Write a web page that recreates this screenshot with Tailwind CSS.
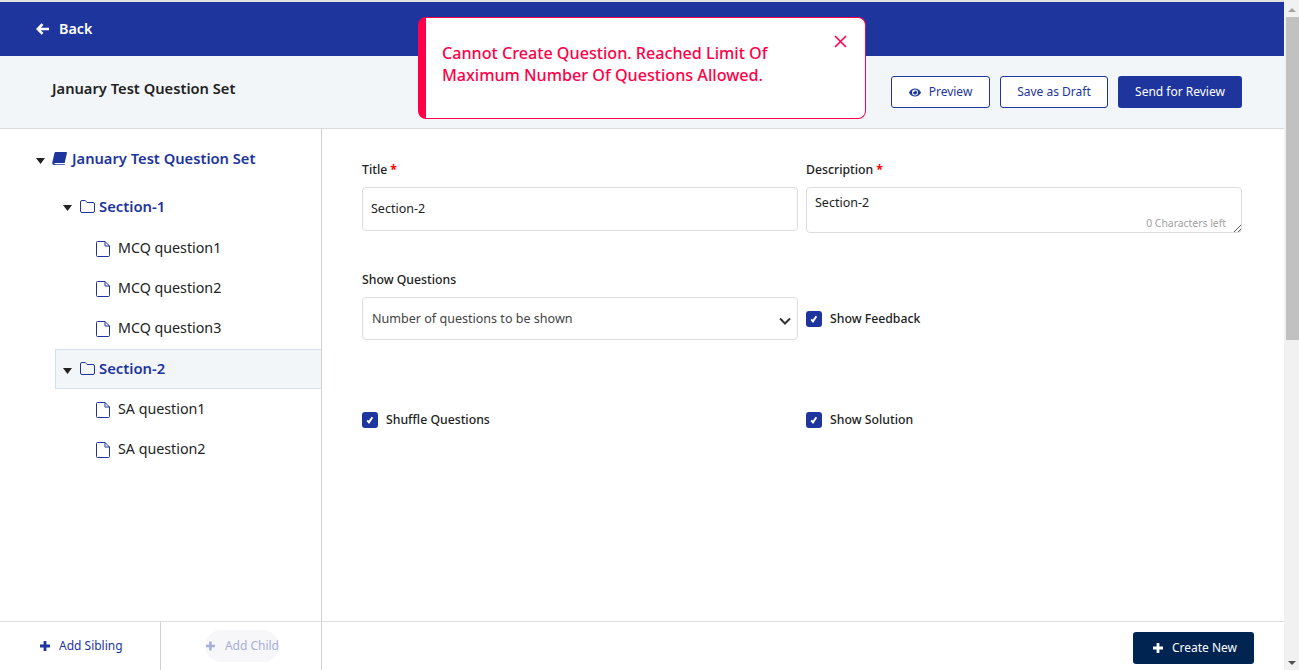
<!DOCTYPE html>
<html>
<head>
<meta charset="utf-8">
<script src="https://cdn.jsdelivr.net/npm/@tailwindcss/browser@4"></script>
</head>
<body class="overflow-hidden bg-white">
<div class="relative flex h-[670px] w-[1299px] font-['Noto_Sans',sans-serif] text-[#222222]">
  <div class="flex h-full w-[1284px] flex-col">
    <div class="h-[2px] bg-[#e3e3e3]"></div>
    <header class="flex h-[54px] items-center bg-[#1d359d] pl-[36px] text-white">
      <svg class="mr-[10px] h-[12px] w-[13px]" viewBox="0 0 13 12" fill="none" stroke="currentColor" stroke-width="2.600"><path d="M6.500 1.200L1.800 6l4.700 4.800M2 6h11"/></svg>
      <span class="pt-[1px] text-[14.300px] font-semibold leading-none">Back</span>
    </header>
    <div class="flex h-[73px] items-center justify-between border-b border-[#d9dbdd] bg-[#f3f6f9] pr-[42px] pl-[52px]">
      <span class="mb-[8px] text-[14.700px] font-semibold text-[#222222]">January Test Question Set</span>
      <div class="flex gap-[10px] text-[12px] text-[#1d359d]">
        <button class="flex h-[32px] w-[99px] items-center justify-center gap-[8px] rounded-[3px] border border-[#1d359d] bg-white">
          <svg class="h-[11px] w-[12px]" viewBox="0 0 576 512" fill="currentColor"><path d="M572.500 241.400C518.300 135.600 410.900 64 288 64S57.700 135.600 3.500 241.400a32.400 32.400 0 0 0 0 29.200C57.700 376.400 165.100 448 288 448s230.300-71.600 284.500-177.400a32.400 32.400 0 0 0 0-29.200zM288 400a144 144 0 1 1 144-144 143.900 143.900 0 0 1-144 144zm0-240a95.300 95.300 0 0 0-25.300 3.800 47.900 47.900 0 0 1-66.900 66.900A95.800 95.800 0 1 0 288 160z"/></svg>
          Preview
        </button>
        <button class="h-[32px] w-[108px] rounded-[3px] border border-[#1d359d] bg-white">Save as Draft</button>
        <button class="h-[32px] w-[124px] rounded-[3px] bg-[#1d359d] text-white">Send for Review</button>
      </div>
    </div>
    <div class="flex min-h-0 flex-1">
      <aside class="w-[322px] shrink-0 border-r border-[#cfd1d3]">
        <div class="flex h-[60px] items-center pl-[36px] pb-[1px]">
          <svg class="mr-[7px] mt-[4px] h-[6px] w-[9px]" viewBox="0 0 9 6" fill="#222222"><path d="M0 0h9L4.500 6z"/></svg>
          <svg class="mr-[5px] h-[13px] w-[15px]" viewBox="0 0 15 13" fill="#1d359d"><path d="M4 0h10.200c.5 0 .8.400.7.900L12.800 10.500c-.1.400-.4.500-.8.500H3c-.8 0-.9 1.200 0 1.200h9.600c.2 0 .3 0 .3.200 0 .4-.2.600-.5.600H2.200C.8 13 0 12 .3 10.800L2.400 1.300C2.600.5 3.200 0 4 0z"/></svg>
          <span class="text-[14.700px] font-semibold text-[#1d359d]">January Test Question Set</span>
        </div>
        <div class="flex h-[39px] items-center pl-[63px] pb-[5px]">
          <svg class="mr-[8px] mt-[4px] h-[6px] w-[9px]" viewBox="0 0 9 6" fill="#222222"><path d="M0 0h9L4.500 6z"/></svg>
          <svg class="mr-[4px] h-[13px] w-[15px]" viewBox="0 0 15 13" fill="none" stroke="#1d359d"><path d="M.5 11V2A1.500 1.500 0 0 1 2 .5h3.200L7 2.500h6A1.500 1.500 0 0 1 14.500 4v7a1.500 1.500 0 0 1-1.500 1.500H2A1.500 1.500 0 0 1 .5 11z"/></svg>
          <span class="text-[14.800px] font-semibold text-[#1d359d]">Section-1</span>
        </div>
        <div class="flex h-[40px] items-center pl-[96px] text-[14.250px]"><svg class="mr-[8px] mt-[2px] h-[16px] w-[14px]" viewBox="0 0 14 16" fill="none" stroke="#1d359d"><path d="M.5 1.500a1 1 0 0 1 1-1H9l4.500 4.500v9.500a1 1 0 0 1-1 1h-11a1 1 0 0 1-1-1zM9 .5V5h4.500"/></svg>MCQ question1</div>
        <div class="flex h-[40px] items-center pl-[96px] text-[14.250px]"><svg class="mr-[8px] mt-[2px] h-[16px] w-[14px]" viewBox="0 0 14 16" fill="none" stroke="#1d359d"><path d="M.5 1.500a1 1 0 0 1 1-1H9l4.500 4.500v9.500a1 1 0 0 1-1 1h-11a1 1 0 0 1-1-1zM9 .5V5h4.500"/></svg>MCQ question2</div>
        <div class="flex h-[40px] items-center pl-[96px] text-[14.250px]"><svg class="mr-[8px] mt-[2px] h-[16px] w-[14px]" viewBox="0 0 14 16" fill="none" stroke="#1d359d"><path d="M.5 1.500a1 1 0 0 1 1-1H9l4.500 4.500v9.500a1 1 0 0 1-1 1h-11a1 1 0 0 1-1-1zM9 .5V5h4.500"/></svg>MCQ question3</div>
        <div class="mt-[1px] ml-[55px] flex h-[40px] items-center border border-r-0 border-[#d5dfef] bg-[#f3f6f9] pl-[7px] pb-[1px]">
          <svg class="mr-[8px] mt-[4px] h-[6px] w-[9px]" viewBox="0 0 9 6" fill="#222222"><path d="M0 0h9L4.500 6z"/></svg>
          <svg class="mr-[4px] h-[13px] w-[15px]" viewBox="0 0 15 13" fill="none" stroke="#1d359d"><path d="M.5 11V2A1.500 1.500 0 0 1 2 .5h3.200L7 2.500h6A1.500 1.500 0 0 1 14.500 4v7a1.500 1.500 0 0 1-1.500 1.500H2A1.500 1.500 0 0 1 .5 11z"/></svg>
          <span class="text-[14.800px] font-semibold text-[#1d359d]">Section-2</span>
        </div>
        <div class="flex h-[40px] items-center pl-[96px] text-[14.250px]"><svg class="mr-[8px] mt-[2px] h-[16px] w-[14px]" viewBox="0 0 14 16" fill="none" stroke="#1d359d"><path d="M.5 1.500a1 1 0 0 1 1-1H9l4.500 4.500v9.500a1 1 0 0 1-1 1h-11a1 1 0 0 1-1-1zM9 .5V5h4.500"/></svg>SA question1</div>
        <div class="flex h-[40px] items-center pl-[96px] text-[14.250px]"><svg class="mr-[8px] mt-[2px] h-[16px] w-[14px]" viewBox="0 0 14 16" fill="none" stroke="#1d359d"><path d="M.5 1.500a1 1 0 0 1 1-1H9l4.500 4.500v9.500a1 1 0 0 1-1 1h-11a1 1 0 0 1-1-1zM9 .5V5h4.500"/></svg>SA question2</div>
      </aside>
      <main class="flex-1 pt-[32px] pl-[40px] pr-[42px] text-[12.250px]">
        <div class="grid grid-cols-[436px_436px] gap-x-[8px]">
          <div>
            <div class="mb-[8px] flex h-[18px] items-center font-medium">Title<span class="ml-[3px] font-bold text-[#ff0000]">*</span></div>
            <div class="flex h-[44px] items-center rounded-[4px] border border-[#dddddd] bg-white pl-[8px] text-[12.500px] text-[#222222]">Section-2</div>
          </div>
          <div>
            <div class="mb-[8px] flex h-[18px] items-center font-medium">Description<span class="ml-[3px] font-bold text-[#ff0000]">*</span></div>
            <div class="relative h-[46px] rounded-[4px] border border-[#dddddd] bg-white pl-[8px] pt-[6px] text-[12.500px] leading-[18px]">Section-2
              <span class="absolute right-[15px] bottom-[1px] text-[10.400px] leading-[15px] text-[#a0a0a0]">0 Characters left</span>
              <svg class="absolute right-0 bottom-0 h-[8px] w-[8px]" viewBox="0 0 8 8" stroke="#555555" fill="none"><path d="M1 8l7-7M5 8l3-3"/></svg>
            </div>
          </div>
        </div>
        <div class="mt-[38px] grid grid-cols-[436px_436px] gap-x-[8px]">
          <div>
            <div class="mb-[8px] flex h-[18px] items-center font-medium">Show Questions</div>
            <div class="flex h-[43px] items-center justify-between rounded-[4px] border border-[#dddddd] bg-white pl-[9px] pr-[6px] pt-[1px] text-[12.550px] text-[#444444]">Number of questions to be shown
              <svg class="mt-[3px] h-[8px] w-[12px]" viewBox="0 0 12 8" fill="none" stroke="#333333" stroke-width="2"><path d="M1 1.500l5 5 5-5"/></svg>
            </div>
          </div>
          <div class="flex items-end pb-[12px]">
            <div class="flex items-center gap-[8px] font-medium">
              <span class="flex h-[16px] w-[16px] items-center justify-center rounded-[3px] bg-[#1d359d]"><svg class="h-[8px] w-[8px]" viewBox="0 0 10 10" fill="none" stroke="#ffffff" stroke-width="2.400"><path d="M1.500 5.500l2.200 2.500L8 1.500"/></svg></span>
              Show Feedback
            </div>
          </div>
        </div>
        <div class="mt-[71px] grid grid-cols-[436px_436px] gap-x-[8px] font-medium">
          <div class="flex items-center gap-[8px]">
            <span class="flex h-[16px] w-[16px] items-center justify-center rounded-[3px] bg-[#1d359d]"><svg class="h-[8px] w-[8px]" viewBox="0 0 10 10" fill="none" stroke="#ffffff" stroke-width="2.400"><path d="M1.500 5.500l2.200 2.500L8 1.500"/></svg></span>
            Shuffle Questions
          </div>
          <div class="flex items-center gap-[8px]">
            <span class="flex h-[16px] w-[16px] items-center justify-center rounded-[3px] bg-[#1d359d]"><svg class="h-[8px] w-[8px]" viewBox="0 0 10 10" fill="none" stroke="#ffffff" stroke-width="2.400"><path d="M1.500 5.500l2.200 2.500L8 1.500"/></svg></span>
            Show Solution
          </div>
        </div>
      </main>
    </div>
    <footer class="flex h-[49px] border-t border-[#dddddd] text-[12px] whitespace-nowrap">
      <div class="flex w-[161px] items-center border-r border-[#cfd1d3] pl-[40px] text-[#1d359d]">
        <svg class="mr-[9px] h-[10px] w-[10px]" viewBox="0 0 10 10" fill="currentColor"><path d="M3.600 0h2.800v3.600H10v2.800H6.400V10H3.600V6.400H0V3.600h3.600z"/></svg>Add Sibling
      </div>
      <div class="flex w-[161px] items-center border-r border-[#cfd1d3] pl-[44px]">
        <div class="flex h-[32px] w-[74px] items-center rounded-[16px] bg-[#f7f7f9] text-[#a5aedb]">
          <svg class="mr-[10px] ml-[1px] h-[10px] w-[10px]" viewBox="0 0 10 10" fill="currentColor"><path d="M3.600 0h2.800v3.600H10v2.800H6.400V10H3.600V6.400H0V3.600h3.600z"/></svg>Add Child
        </div>
      </div>
      <div class="flex flex-1 items-center justify-end pt-[3px] pr-[30px]">
        <button class="flex h-[32px] w-[121px] items-center justify-center gap-[9px] rounded-[3px] bg-[#002451] pl-[3px] text-white">
          <svg class="h-[10px] w-[10px]" viewBox="0 0 10 10" fill="currentColor"><path d="M3.600 0h2.800v3.600H10v2.800H6.400V10H3.600V6.400H0V3.600h3.600z"/></svg><span class="pt-[1px]">Create New</span>
        </button>
      </div>
    </footer>
  </div>
  <div class="flex h-full w-[15px] flex-col items-center bg-[#f1f1f1] pt-[2px]">
    <div class="flex h-[15px] w-full items-center justify-center"><svg class="h-[4px] w-[8px]" viewBox="0 0 8 4" fill="#a3a3a3"><path d="M0 4h8L4 0z"/></svg></div>
    <div class="ml-[1px] h-[323px] w-[13px] bg-[#c1c1c1]"></div>
    <div class="flex-1"></div>
    <div class="flex h-[15px] w-full items-center justify-center"><svg class="h-[4px] w-[8px]" viewBox="0 0 8 4" fill="#505050"><path d="M0 0h8L4 4z"/></svg></div>
  </div>
  <div class="absolute top-[17px] left-[418px] h-[102px] w-[448px] rounded-[8px] border border-[#ff0048] border-l-[8px] bg-white pt-[24px] pl-[16px] text-[16.150px] font-medium leading-[22px] text-[#ff0048]">
    Cannot Create Question. Reached Limit Of<br>Maximum Number Of Questions Allowed.
    <svg class="absolute top-[17px] right-[18px] h-[13px] w-[13px]" viewBox="0 0 13 13" fill="none" stroke="#ff0048" stroke-width="1.600"><path d="M1 1l11 11M12 1L1 12"/></svg>
  </div>
</div>
</body>
</html>
